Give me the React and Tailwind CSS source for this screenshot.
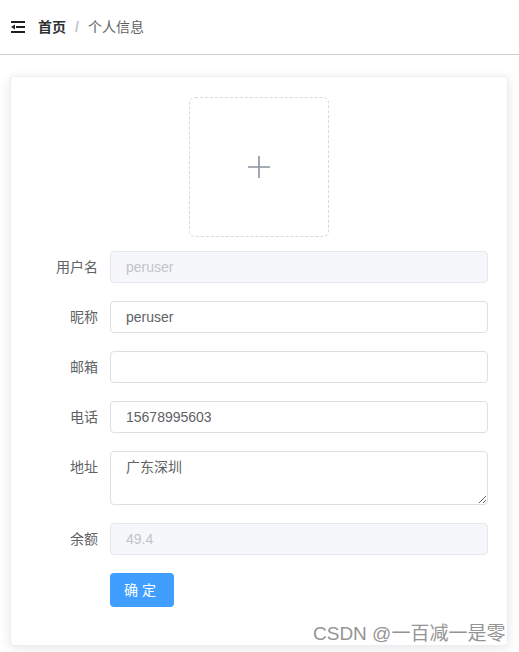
import React from 'react';

const font = "font-['Helvetica_Neue','Liberation_Sans','Noto_Sans_CJK_SC',sans-serif]";

const FoldIcon = () => (
  <svg width="14" height="12" viewBox="0 0 14 12" className="text-[#1f1f1f]">
    <rect x="0" y="0" width="14" height="2" fill="currentColor" />
    <rect x="5" y="5" width="9" height="2" fill="currentColor" />
    <path d="M0 6 L4 3.5 L4 8.5 Z" fill="currentColor" />
    <rect x="0" y="10" width="14" height="2" fill="currentColor" />
  </svg>
);

const Row = ({ label, children, className = 'mb-[18px]' }) => (
  <div className={`flex items-start ${className}`}>
    <label className="w-[80px] shrink-0 pr-3 text-right text-sm leading-8 text-[#606266]">{label}</label>
    <div className="flex-1">{children}</div>
  </div>
);

const Input = ({ value = '', disabled = false }) => (
  <input
    readOnly
    value={value}
    className={`block h-8 w-full rounded border px-[15px] text-sm outline-none ${
      disabled ? 'border-[#e4e7ed] bg-[#f5f7fa] text-[#c0c4cc]' : 'border-[#dcdfe6] bg-white text-[#606266]'
    }`}
  />
);

export default function App() {
  return (
    <div className={`relative min-h-[652px] bg-white ${font}`}>
      <header className="flex h-[55px] items-center gap-[13px] border-b border-[#cfcfcf] px-[11px] text-sm">
        <FoldIcon />
        <div className="flex items-center">
          <span className="font-bold text-[#303133]">首页</span>
          <span className="mx-[9px] font-bold text-[#c0c4cc]">/</span>
          <span className="text-[#606266]">个人信息</span>
        </div>
      </header>

      <main className="px-[10px] pt-[21px]">
        <div className="w-[498px] rounded border border-[#ebeef5] bg-white px-[19px] py-5 shadow-[0_2px_12px_0_rgba(0,0,0,0.1)]">
          <div className="mb-[14px] flex justify-center">
            <div className="flex h-[140px] w-[140px] items-center justify-center rounded-md border border-dashed border-[#d9d9d9]">
              <svg width="24" height="24" viewBox="0 0 24 24">
                <path d="M12 1 V23 M1 12 H23" stroke="#8c939d" strokeWidth="1.6" />
              </svg>
            </div>
          </div>

          <Row label="用户名"><Input value="peruser" disabled /></Row>
          <Row label="昵称"><Input value="peruser" /></Row>
          <Row label="邮箱"><Input /></Row>
          <Row label="电话"><Input value="15678995603" /></Row>
          <Row label="地址">
            <textarea
              readOnly
              value="广东深圳"
              className="block h-[54px] w-full rounded border border-[#dcdfe6] px-[15px] py-[5px] text-sm leading-[1.5] text-[#606266] outline-none"
            />
          </Row>
          <Row label="余额"><Input value="49.4" disabled /></Row>
          <Row label="">
            <button className="h-[34px] w-[64px] rounded bg-[#409eff] text-sm tracking-[4px] text-white">确定</button>
          </Row>
        </div>
      </main>

      <div className="pointer-events-none absolute left-[313px] top-[620px] text-[19px] text-[#7a7a7a] opacity-80">
        CSDN @一百减一是零
      </div>
    </div>
  );
}
